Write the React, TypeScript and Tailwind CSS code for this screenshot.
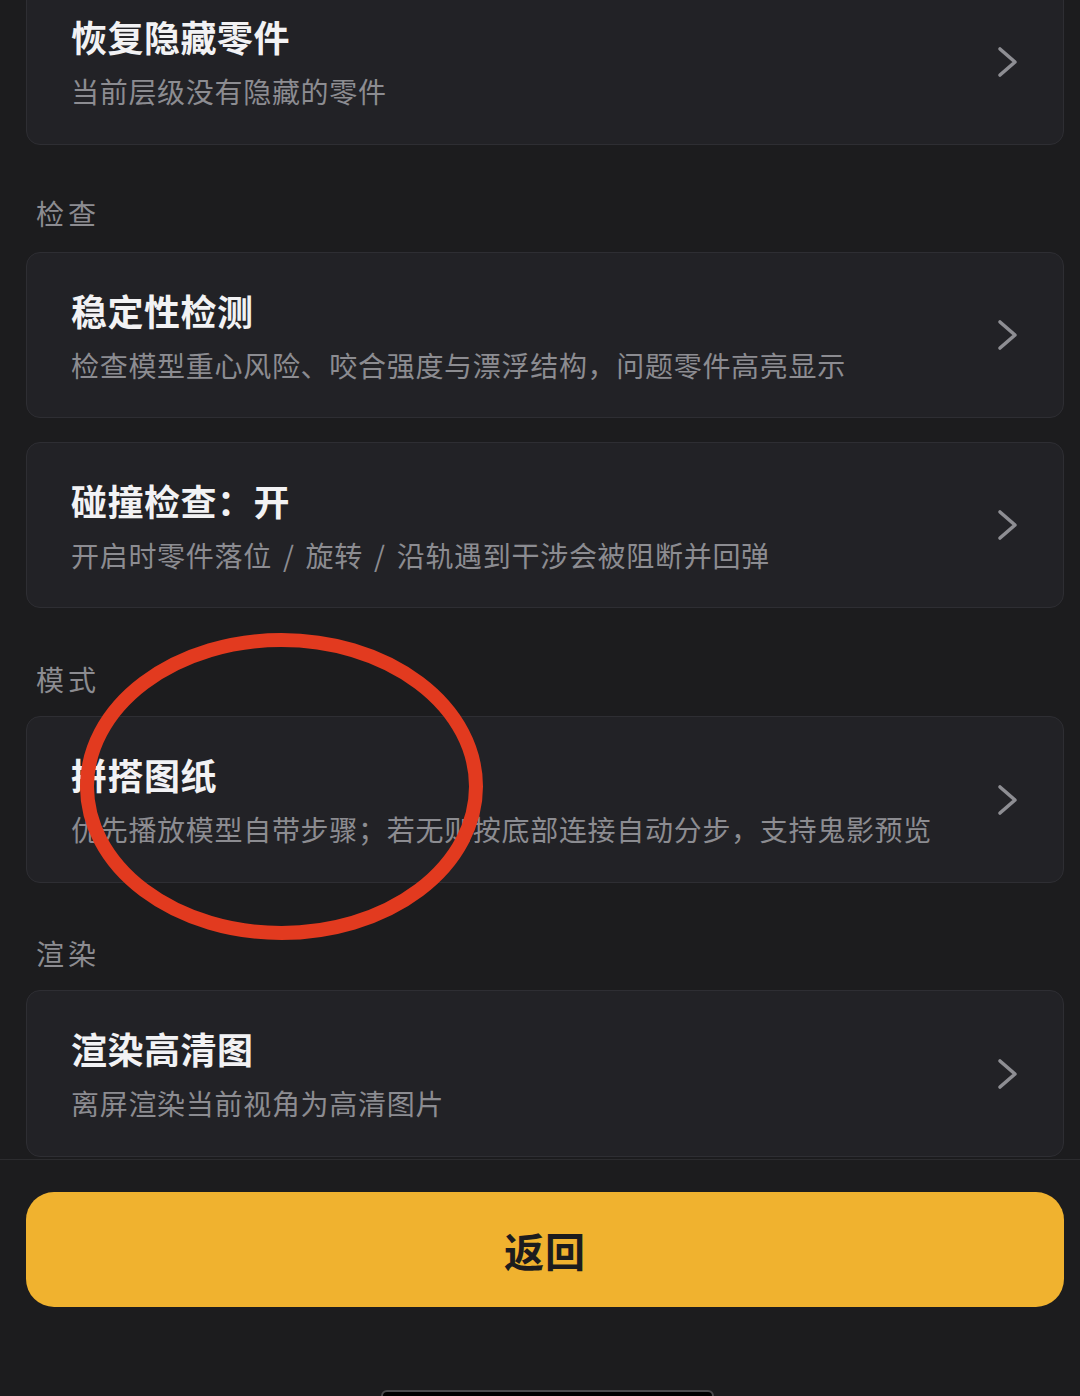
import React from "react";

const font = { fontFamily: '"Noto Sans CJK SC", "Noto Sans", sans-serif' };

function Chevron() {
  return (
    <svg width="22" height="32" viewBox="0 0 22 32" className="shrink-0">
      <polyline
        points="3,3 18,16 3,29"
        fill="none"
        stroke="#8e8e93"
        strokeWidth="3.6"
        strokeLinecap="round"
        strokeLinejoin="round"
      />
    </svg>
  );
}

function Card({ title, sub, h = "h-[166px]" }: { title: string; sub: React.ReactNode; h?: string }) {
  return (
    <div
      className={`${h} flex items-center justify-between rounded-[14px] border border-[#2e2e33] bg-[#222226] pl-[44px] pr-[44px]`}
    >
      <div className="flex flex-col gap-[15px]">
        <div className="text-[36px] leading-[44px] font-bold tracking-[0.5px] text-[#f2f2f4]">{title}</div>
        <div className="text-[28px] leading-[36px] tracking-[0.7px] text-[#8c8c91]">{sub}</div>
      </div>
      <Chevron />
    </div>
  );
}

function Label({ text, cls }: { text: string; cls: string }) {
  return (
    <div className={`${cls} pl-[10px] h-[36px] text-[28px] leading-[36px] tracking-[4px] text-[#8c8c91]`}>
      {text}
    </div>
  );
}

function Slash() {
  return <span className="mx-[11px]">/</span>;
}

export default function App() {
  return (
    <div className="relative w-[1080px] h-[1396px] overflow-hidden bg-[#1c1c1e]" style={font}>
      <div className="h-[1159px] overflow-hidden">
        <div className="-mt-[22px] pl-[26px] pr-[16px]">
          <Card h="h-[167px]" title="恢复隐藏零件" sub="当前层级没有隐藏的零件" />
          <Label text="检查" cls="mt-[50px] mb-[21px]" />
          <Card title="稳定性检测" sub="检查模型重心风险、咬合强度与漂浮结构，问题零件高亮显示" />
          <div className="h-[24px]" />
          <Card
            title="碰撞检查：开"
            sub={
              <>
                开启时零件落位<Slash />旋转<Slash />沿轨遇到干涉会被阻断并回弹
              </>
            }
          />
          <Label text="模式" cls="mt-[53px] mb-[19px]" />
          <Card h="h-[167px]" title="拼搭图纸" sub="优先播放模型自带步骤；若无则按底部连接自动分步，支持鬼影预览" />
          <Label text="渲染" cls="mt-[52px] mb-[19px]" />
          <Card h="h-[167px]" title="渲染高清图" sub="离屏渲染当前视角为高清图片" />
        </div>
      </div>
      <div className="border-t border-[#2c2c2f] pt-[32px] pl-[26px] pr-[16px]">
        <div className="h-[115px] rounded-[28px] bg-[#f0b22f] flex items-center justify-center">
          <span className="text-[40px] font-semibold text-[#1c1c1e] tracking-[1px]">返回</span>
        </div>
        <div className="mt-[83px] ml-[355px] w-[333px] h-[14px] rounded-t-[6px] border-2 border-[#4a4a4c] bg-black" />
      </div>
      <svg
        className="absolute left-0 top-0 pointer-events-none"
        width="1080"
        height="1396"
        viewBox="0 0 1080 1396"
      >
        <ellipse cx="281.5" cy="786.5" rx="194.5" ry="146.5" fill="none" stroke="#e23a1f" strokeWidth="14" />
      </svg>
    </div>
  );
}
